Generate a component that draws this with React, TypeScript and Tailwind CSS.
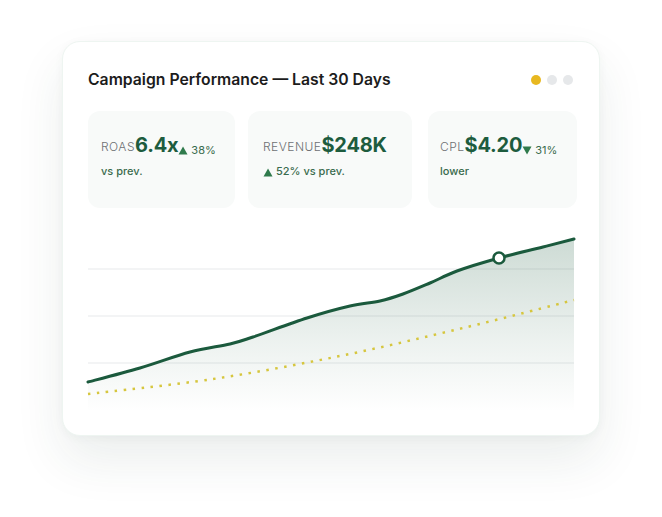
import React from "react";

type P = [number, number];

function smooth(pts: P[]): string {
  let d = `M${pts[0][0]},${pts[0][1]}`;
  for (let i = 0; i < pts.length - 1; i++) {
    const p0 = pts[i - 1] || pts[i];
    const p1 = pts[i];
    const p2 = pts[i + 1];
    const p3 = pts[i + 2] || p2;
    const c1x = p1[0] + (p2[0] - p0[0]) / 6;
    const c1y = p1[1] + (p2[1] - p0[1]) / 6;
    const c2x = p2[0] - (p3[0] - p1[0]) / 6;
    const c2y = p2[1] - (p3[1] - p1[1]) / 6;
    d += ` C${c1x.toFixed(1)},${c1y.toFixed(1)} ${c2x.toFixed(1)},${c2y.toFixed(1)} ${p2[0]},${p2[1]}`;
  }
  return d;
}

const greenPts: P[] = [
  [0, 156], [52, 142], [102, 126], [142, 118], [165, 111],
  [219, 92], [262, 80], [292, 75], [315, 68],
  [342, 57], [369, 45], [411, 32], [455, 21], [486, 13],
];
const goldPts: P[] = [[0, 168], [125, 153], [252, 130], [375, 102], [486, 74]];

const Up = () => (
  <svg width="10" height="9" viewBox="0 0 10 9" className="inline-block">
    <path d="M5 0.5 L9.5 8.5 L0.5 8.5 Z" fill="#2f7a4c" />
  </svg>
);
const Down = () => (
  <svg width="10" height="9" viewBox="0 0 10 9" className="inline-block">
    <path d="M0.5 0.5 L9.5 0.5 L5 8.5 Z" fill="#2f7a4c" />
  </svg>
);

function Metric({
  cls,
  label,
  value,
  change,
  sub,
  down,
}: {
  cls: string;
  label: string;
  value: string;
  change?: string;
  sub: React.ReactNode;
  down?: boolean;
}) {
  return (
    <div className={`${cls} shrink-0 h-[97px] rounded-[12px] bg-[#f8faf9] pt-[24px]`}>
      <div className="flex items-end leading-none">
        <span className="text-[12px] tracking-[0.04em] text-[#6d7073] font-light mb-[2px]">{label}</span>
        <span className="text-[20px] font-bold text-[#1d5c3e] tracking-[-0.01em]">{value}</span>
        {change && (
          <span className="flex items-end gap-[3px] text-[11px] text-[#3a6b4d]">
            {down ? <Down /> : <Up />}
            <span className="mb-[-1px]">{change}</span>
          </span>
        )}
      </div>
      <div className="mt-[11px] text-[11px] font-medium text-[#3a6b4d] leading-none">{sub}</div>
    </div>
  );
}

export default function App() {
  const line = smooth(greenPts);
  const area = `${line} L486,186 L0,186 Z`;
  const gold = smooth(goldPts);
  return (
    <div
      className="w-[662px] h-[517px] bg-white overflow-hidden"
      style={{ fontFamily: "Inter, 'Noto Sans', sans-serif" }}
    >
      <div className="ml-[62px] mt-[41px] w-[538px] h-[395px] rounded-[18px] bg-white border border-[#eef5f1] shadow-[0_24px_50px_rgba(30,70,50,0.09),0_2px_10px_rgba(30,70,50,0.04)] pl-[25px] pr-[25px]">
        <div className="pt-[27px] h-[49px] flex items-center justify-between">
          <div className="text-[15.75px] font-semibold text-[#1c1c1c]">
            Campaign Performance — Last 30 Days
          </div>
          <div className="flex items-center gap-[6px] pr-[1px]">
            <span className="w-[10px] h-[10px] rounded-full bg-[#e8b820]" />
            <span className="w-[10px] h-[10px] rounded-full bg-[#e6e8ea]" />
            <span className="w-[10px] h-[10px] rounded-full bg-[#e6e8ea]" />
          </div>
        </div>
        <div className="mt-[20px] flex">
          <Metric cls="w-[147px] pl-[13px]" label="ROAS" value="6.4x" change="38%" sub="vs prev." />
          <Metric
            cls="ml-[13px] w-[164px] pl-[15px]"
            label="REVENUE"
            value="$248K"
            sub={
              <span className="flex items-end gap-[3px]">
                <Up />
                <span>52% vs prev.</span>
              </span>
            }
          />
          <Metric cls="ml-[16px] w-[149px] pl-[12px]" label="CPL" value="$4.20" change="31%" sub="lower" down />
        </div>
        <svg width="487" height="190" viewBox="0 0 487 190" className="mt-[18px] block overflow-visible">
          <defs>
            <linearGradient id="fillg" x1="0" y1="0" x2="0" y2="1">
              <stop offset="0" stopColor="#1d5c3e" stopOpacity="0.22" />
              <stop offset="0.6" stopColor="#1d5c3e" stopOpacity="0.08" />
              <stop offset="1" stopColor="#1d5c3e" stopOpacity="0" />
            </linearGradient>
          </defs>
          <line x1="0" y1="43" x2="486" y2="43" stroke="#e7e9eb" strokeWidth="1" />
          <line x1="0" y1="90" x2="486" y2="90" stroke="#e7e9eb" strokeWidth="1" />
          <line x1="0" y1="137" x2="486" y2="137" stroke="#e7e9eb" strokeWidth="1" />
          <path d={area} fill="url(#fillg)" />
          <path
            d={gold}
            fill="none"
            stroke="#d6c63e"
            strokeWidth="2.5"
            strokeDasharray="2.5 6.5"
          />
          <path d={line} fill="none" stroke="#1b5a3d" strokeWidth="3" strokeLinecap="round" />
          <circle cx="411" cy="32" r="5.5" fill="#ffffff" stroke="#1b5a3d" strokeWidth="2.5" />
        </svg>
      </div>
    </div>
  );
}
